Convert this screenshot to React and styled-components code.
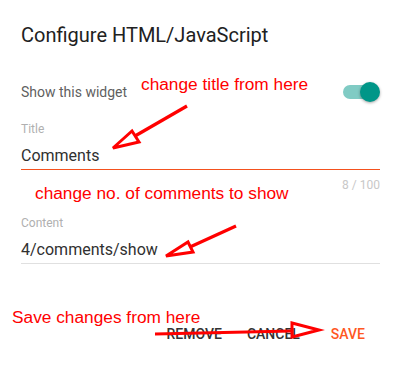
import React from 'react';
import styled, { createGlobalStyle } from 'styled-components';

const GlobalStyle = createGlobalStyle`
  html, body {
    margin: 0;
    padding: 0;
    background: #ffffff;
  }
  body {
    font-family: Roboto, "Noto Sans", Arial, sans-serif;
  }
`;

const Page = styled.div`
  position: relative;
  width: 402px;
  height: 366px;
  overflow: hidden;
  background: #fff;
`;

const Dialog = styled.div`
  display: flex;
  flex-direction: column;
  padding: 23px 22px 0 21px;
`;

const Heading = styled.h2`
  margin: 0;
  font-size: 20px;
  line-height: 24px;
  font-weight: 400;
  color: #212121;
`;

const ToggleRow = styled.div`
  display: flex;
  align-items: center;
  justify-content: space-between;
  height: 20px;
  margin-top: 35px;
`;

const RowLabel = styled.span`
  font-size: 14px;
  line-height: 20px;
  color: #5f5f5f;
`;

const Switch = styled.div`
  position: relative;
  width: 37px;
  height: 20px;
`;

const Track = styled.div`
  position: absolute;
  left: 0;
  top: 3px;
  width: 34px;
  height: 14px;
  border-radius: 7px;
  background: #80cbc4;
`;

const Thumb = styled.div`
  position: absolute;
  right: 0;
  top: 0;
  width: 20px;
  height: 20px;
  border-radius: 50%;
  background: #009688;
  box-shadow: 0 1px 3px rgba(0, 0, 0, 0.35);
`;

const Field = styled.div`
  display: flex;
  flex-direction: column;
  margin-top: ${(p) => p.$top}px;
`;

const FieldLabel = styled.label`
  font-size: 12px;
  line-height: 16px;
  color: #b0b0b0;
  margin-bottom: 7px;
`;

const FieldValue = styled.div`
  font-size: 16px;
  line-height: 24px;
  color: #303030;
  padding-bottom: 1px;
  border-bottom: 1px solid ${(p) => (p.$focused ? '#f4511e' : '#e0e0e0')};
`;

const Counter = styled.div`
  align-self: flex-end;
  margin-top: 7px;
  font-size: 12px;
  line-height: 16px;
  color: #c8c8c8;
`;

const Actions = styled.div`
  display: flex;
  justify-content: flex-end;
  align-items: center;
  margin-top: 52px;
  padding-right: 7px;
`;

const Button = styled.button`
  border: none;
  background: none;
  padding: 8px 8px;
  margin-left: ${(p) => p.$gap}px;
  font-family: Roboto, Arial, sans-serif;
  font-size: 14px;
  line-height: 20px;
  font-weight: 500;
  text-transform: uppercase;
  color: ${(p) => (p.$primary ? '#ff5722' : '#333333')};
  cursor: pointer;
`;

const Note = styled.div`
  position: absolute;
  left: ${(p) => p.$x}px;
  top: ${(p) => p.$y}px;
  font-family: "Liberation Sans", Arial, sans-serif;
  font-size: 17.3px;
  line-height: 17px;
  color: #ff0000;
  white-space: nowrap;
`;

const Overlay = styled.svg`
  position: absolute;
  left: 0;
  top: 0;
  pointer-events: none;
`;

const Arrow = ({ from, to, head }) => (
  <g stroke="#ff0000" fill="none" strokeLinejoin="miter">
    <line x1={from[0]} y1={from[1]} x2={to[0]} y2={to[1]} strokeWidth="3.2" />
    <polygon points={head.map((p) => p.join(',')).join(' ')} strokeWidth="3" />
  </g>
);

export default function App() {
  return (
    <Page>
      <GlobalStyle />
      <Dialog>
        <Heading>Configure HTML/JavaScript</Heading>
        <ToggleRow>
          <RowLabel>Show this widget</RowLabel>
          <Switch>
            <Track />
            <Thumb />
          </Switch>
        </ToggleRow>
        <Field $top={19}>
          <FieldLabel>Title</FieldLabel>
          <FieldValue $focused>Comments</FieldValue>
          <Counter>8 / 100</Counter>
        </Field>
        <Field $top={22}>
          <FieldLabel>Content</FieldLabel>
          <FieldValue>4/comments/show</FieldValue>
        </Field>
        <Actions>
          <Button>Remove</Button>
          <Button $gap={9}>Cancel</Button>
          <Button $gap={15} $primary>Save</Button>
        </Actions>
      </Dialog>

      <Note $x={141} $y={76}>change title from here</Note>
      <Note $x={35} $y={185}>change no. of comments to show</Note>
      <Note $x={12} $y={309}>Save changes from here</Note>

      <Overlay width="402" height="366" viewBox="0 0 402 366">
        <Arrow
          from={[187, 106]}
          to={[135, 136]}
          head={[[113, 148], [132, 131], [139, 142]]}
        />
        <Arrow
          from={[236, 226]}
          to={[190, 247]}
          head={[[166, 256], [188, 242], [193, 252]]}
        />
        <Arrow
          from={[155, 334]}
          to={[292, 331]}
          head={[[292, 323], [292, 337], [319, 330]]}
        />
      </Overlay>
    </Page>
  );
}
